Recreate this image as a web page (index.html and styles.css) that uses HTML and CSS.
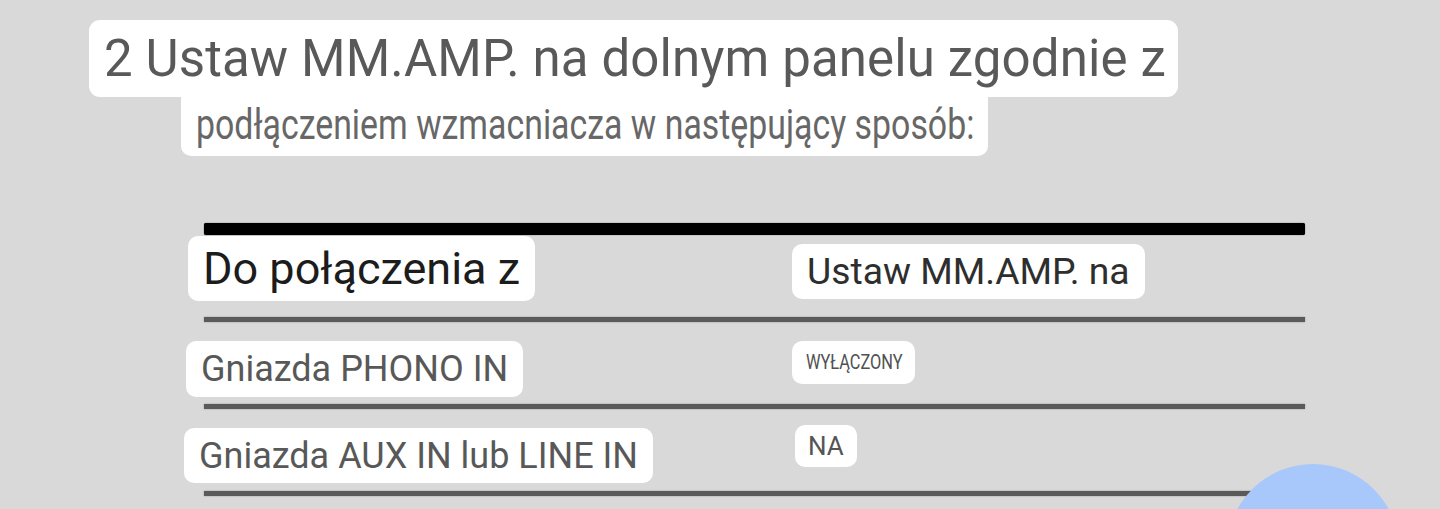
FILE: index.html
```html
<!DOCTYPE html>
<html lang="pl">
<head>
<meta charset="utf-8">
<title>MM.AMP</title>
<link rel="stylesheet" href="styles.css">
</head>
<body>
<main class="page">
  <header class="heading">
    <div class="title-box"><span class="title">2 Ustaw MM.AMP. na dolnym panelu zgodnie z</span></div>
    <div class="sub-box"><span class="sub">podłączeniem wzmacniacza w następujący sposób:</span></div>
  </header>

  <section class="table">
    <div class="rule-thick"></div>
    <div class="row row-head">
      <div class="cell"><span class="label label-head1">Do połączenia z</span></div>
      <div class="cell"><span class="label label-head2">Ustaw MM.AMP. na</span></div>
    </div>
    <div class="rule"></div>
    <div class="row">
      <div class="cell"><span class="label label-row">Gniazda PHONO IN</span></div>
      <div class="cell"><span class="label label-off"><span class="narrow">WYŁĄCZONY</span></span></div>
    </div>
    <div class="rule"></div>
    <div class="row">
      <div class="cell"><span class="label label-row label-row2">Gniazda AUX IN lub LINE IN</span></div>
      <div class="cell"><span class="label label-on">NA</span></div>
    </div>
    <div class="rule"></div>
  </section>

  <div class="bubble"></div>
</main>
</body>
</html>
```

FILE: styles.css
```css
* { box-sizing: border-box; }

html, body {
  margin: 0;
  padding: 0;
}

body {
  background: #d9d9d9;
  font-family: Roboto, "Noto Sans", "Liberation Sans", sans-serif;
  width: 1440px;
  height: 509px;
  overflow: hidden;
}

.page {
  position: relative;
  width: 1440px;
  height: 509px;
  padding-top: 20px;
  overflow: hidden;
}

.heading {
  display: flex;
  flex-direction: column;
  align-items: flex-start;
  padding-left: 89px;
}

.title-box {
  background: #fff;
  border-radius: 11px;
  height: 77px;
  width: 1089px;
  padding-left: 15px;
  display: flex;
  align-items: center;
}

.title {
  font-size: 51px;
  letter-spacing: 0.12px;
  color: #595959;
  white-space: nowrap;
  line-height: 1;
}

.sub-box {
  background: #fff;
  border-radius: 0 0 10px 10px;
  margin-left: 92px;
  width: 807px;
  height: 59px;
  padding-left: 15px;
  display: flex;
  align-items: center;
  overflow: hidden;
}

.sub {
  display: inline-block;
  font-size: 42px;
  color: #676767;
  white-space: nowrap;
  line-height: 1;
  margin-top: -4px;
  transform: scaleX(0.806);
  transform-origin: left center;
}

.table {
  margin-top: 67px;
  margin-left: 204px;
  width: 1101px;
  display: flex;
  flex-direction: column;
}

.rule-thick {
  height: 12px;
  background: #000;
  border-radius: 2px;
  box-shadow: 0 0 1px #000;
}

.rule {
  height: 5px;
  background: #5a5a5a;
  box-shadow: 0 0 1.5px #777;
}

.row {
  display: grid;
  grid-template-columns: 588px 1fr;
  height: 82px;
}

.cell {
  display: flex;
  align-items: flex-start;
}

.label {
  background: #fff;
  border-radius: 10px;
  display: inline-flex;
  align-items: center;
  white-space: nowrap;
  line-height: 1;
}

.label-head1 {
  margin-top: 1px;
  margin-left: -16px;
  height: 65px;
  padding: 0 15px;
  font-size: 45px;
  color: #1c1c1c;
}

.label-head2 {
  margin-top: 9px;
  height: 55px;
  padding: 0 15px;
  font-size: 37.3px;
  color: #2e2e2e;
}

.label-row {
  margin-top: 19px;
  margin-left: -18px;
  height: 56px;
  padding: 0 15px;
  font-size: 36px;
  color: #585858;
}

.label-row2 {
  margin-left: -20px;
  height: 55px;
}

.label-off {
  margin-top: 19px;
  height: 43px;
  width: 123px;
  padding-left: 14px;
  font-size: 21px;
  color: #505050;
  overflow: hidden;
}

.narrow {
  display: inline-block;
  transform: scaleX(0.78);
  transform-origin: left center;
}

.label-on {
  margin-top: 16px;
  margin-left: 3px;
  height: 42px;
  padding: 0 13px;
  font-size: 26px;
  color: #555;
}

.bubble {
  position: absolute;
  left: 1227px;
  top: 464px;
  width: 172px;
  height: 172px;
  border-radius: 50%;
  background: #a8c7fa;
}
```
